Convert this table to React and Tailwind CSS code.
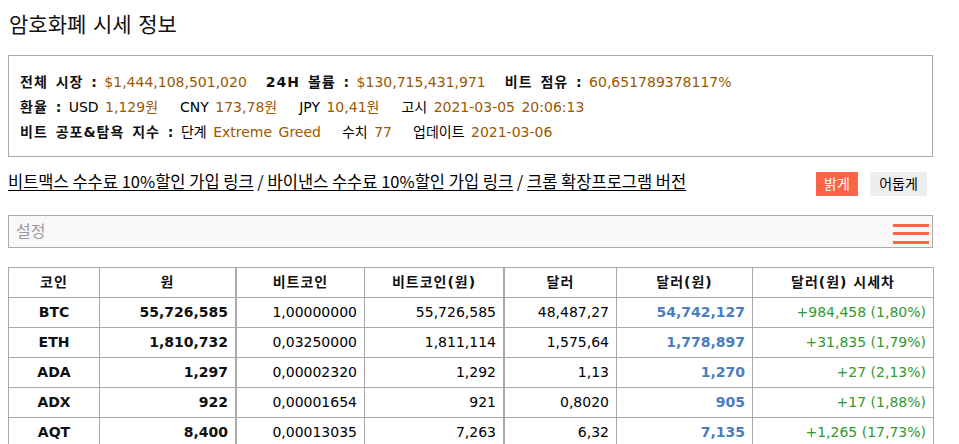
const coins = [
  { sym: "BTC", krw: "55,726,585", btc: "1,00000000", btcKrw: "55,726,585", usd: "48,487,27", usdKrw: "54,742,127", diff: "+984,458 (1,80%)" },
  { sym: "ETH", krw: "1,810,732", btc: "0,03250000", btcKrw: "1,811,114", usd: "1,575,64", usdKrw: "1,778,897", diff: "+31,835 (1,79%)" },
  { sym: "ADA", krw: "1,297", btc: "0,00002320", btcKrw: "1,292", usd: "1,13", usdKrw: "1,270", diff: "+27 (2,13%)" },
  { sym: "ADX", krw: "922", btc: "0,00001654", btcKrw: "921", usd: "0,8020", usdKrw: "905", diff: "+17 (1,88%)" },
  { sym: "AQT", krw: "8,400", btc: "0,00013035", btcKrw: "7,263", usd: "6,32", usdKrw: "7,135", diff: "+1,265 (17,73%)" },
];

const headers = ["코인", "원", "비트코인", "비트코인(원)", "달러", "달러(원)", "달러(원) 시세차"];

// border-r width per column (2px after 원 and 비트코인(원))
const colBorder = ["border-r", "border-r-2", "border-r", "border-r-2", "border-r", "border-r", "border-r"];

const Label = ({ children }) => (
  <span className="font-bold tracking-[1px] text-[#111]">{children}</span>
);

const Val = ({ children }) => <span className="text-[#9a5800]">{children}</span>;

export default function App() {
  return (
    <div className="min-h-screen bg-white px-2 font-['DejaVu_Sans','Noto_Sans_CJK_KR',sans-serif] text-[14px] text-black">
      <h1 className="pt-[13px] pl-px text-[21px] leading-[24px] font-normal text-[#111]">
        암호화폐 시세 정보
      </h1>

      <div className="mt-[18px] w-[925px] border border-[#aaa] px-[11px] pt-[14px] pb-[11px] leading-[25px] [word-spacing:2px]">
        <div>
          <Label>전체 시장 :</Label> <Val>$1,444,108,501,020</Val>
          <span className="ml-[19px]"><Label>24H 볼륨 :</Label></span> <Val>$130,715,431,971</Val>
          <span className="ml-[19px]"><Label>비트 점유 :</Label></span> <Val>60,651789378117%</Val>
        </div>
        <div>
          <Label>환율 :</Label> USD <Val>1,129원</Val>
          <span className="ml-[22px]">CNY</span> <Val>173,78원</Val>
          <span className="ml-[22px]">JPY</span> <Val>10,41원</Val>
          <span className="ml-[22px]">고시</span> <Val>2021-03-05 20:06:13</Val>
        </div>
        <div>
          <Label>비트 공포&amp;탐욕 지수 :</Label> 단계 <Val>Extreme Greed</Val>
          <span className="ml-[21px]">수치</span> <Val>77</Val>
          <span className="ml-[21px]">업데이트</span> <Val>2021-03-06</Val>
        </div>
      </div>

      <div className="mt-[14px] flex w-[925px] items-start justify-between">
        <div className="font-['Noto_Sans_CJK_KR',sans-serif] text-[16.5px] leading-[20px]">
          <a href="#" className="underline underline-offset-2">비트맥스 수수료 10%할인 가입 링크</a>
          {" / "}
          <a href="#" className="underline underline-offset-2">바이낸스 수수료 10%할인 가입 링크</a>
          {" / "}
          <a href="#" className="underline underline-offset-2">크롬 확장프로그램 버전</a>
        </div>
        <div className="mt-px mr-[6px] flex gap-[12px]">
          <button className="h-[24px] w-[42px] bg-[#ff6347] text-[14px] text-white">밝게</button>
          <button className="h-[24px] w-[57px] bg-[#eee] text-[14px] text-black">어둡게</button>
        </div>
      </div>

      <div className="mt-[19px] flex h-[33px] w-[925px] items-center justify-between border border-[#aaa] bg-[#f8f8f8] pl-[7px] pr-[3px]">
        <span className="text-[16px] text-[#999]">설정</span>
        <div className="mt-[4px] flex h-[20px] w-[36px] flex-col justify-between">
          <span className="block h-[3px] bg-[#ff6347]" />
          <span className="block h-[3px] bg-[#ff6347]" />
          <span className="block h-[3px] bg-[#ff6347]" />
        </div>
      </div>

      <div className="mt-[19px] grid w-[926px] grid-cols-[91px_137px_128px_140px_112px_136px_181px] border-t border-l border-[#aaa]">
        {headers.map((h, i) => (
          <div
            key={h}
            className={`flex h-[30px] items-center justify-center border-b border-[#aaa] font-bold tracking-[1px] text-[#111] ${colBorder[i]}`}
          >
            {h}
          </div>
        ))}
        {coins.map((c) => (
          <div key={c.sym} className="contents">
            <div className="flex h-[30px] items-center justify-center border-r border-b border-[#aaa] font-bold text-[#111]">
              {c.sym}
            </div>
            <div className="flex h-[30px] items-center justify-end border-r-2 border-b border-[#aaa] px-[7px] font-bold text-[#111]">
              {c.krw}
            </div>
            <div className="flex h-[30px] items-center justify-end border-r border-b border-[#aaa] px-[7px]">
              {c.btc}
            </div>
            <div className="flex h-[30px] items-center justify-end border-r-2 border-b border-[#aaa] px-[7px]">
              {c.btcKrw}
            </div>
            <div className="flex h-[30px] items-center justify-end border-r border-b border-[#aaa] px-[7px]">
              {c.usd}
            </div>
            <div className="flex h-[30px] items-center justify-end border-r border-b border-[#aaa] px-[7px] font-bold text-[#4a7dbf]">
              {c.usdKrw}
            </div>
            <div className="flex h-[30px] items-center justify-end border-r border-b border-[#aaa] px-[7px] text-[#2f9a2f]">
              {c.diff}
            </div>
          </div>
        ))}
      </div>
    </div>
  );
}
